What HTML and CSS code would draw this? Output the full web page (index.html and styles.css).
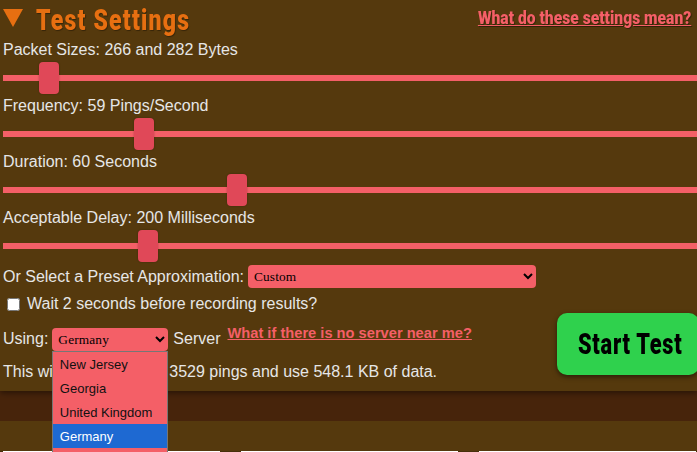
FILE: index.html
```html
<!DOCTYPE html>
<html lang="en">
<head>
<meta charset="utf-8">
<title>Test Settings</title>
<link rel="stylesheet" href="styles.css">
</head>
<body>
<section class="panel">
  <header class="head">
    <h2 class="title"><span class="arrow"></span><span class="title-text">Test Settings</span></h2>
    <a class="help" href="#">What do these settings mean?</a>
  </header>
  <div class="field">
    <label class="lbl">Packet Sizes: 266 and 282 Bytes</label>
    <input class="range" type="range" min="0" max="674" value="36">
  </div>
  <div class="field">
    <label class="lbl">Frequency: 59 Pings/Second</label>
    <input class="range" type="range" min="0" max="674" value="131">
  </div>
  <div class="field">
    <label class="lbl">Duration: 60 Seconds</label>
    <input class="range" type="range" min="0" max="674" value="224">
  </div>
  <div class="field">
    <label class="lbl">Acceptable Delay: 200 Milliseconds</label>
    <input class="range" type="range" min="0" max="674" value="135">
  </div>
  <div class="preset">
    <span>Or Select a Preset Approximation:</span>
    <select class="sel sel-wide"><option>Custom</option></select>
  </div>
  <label class="wait"><input class="check" type="checkbox">Wait 2 seconds before recording results?</label>
  <div class="bottom">
    <div class="bottom-text">
      <div class="using">
        <span>Using:</span>
        <div class="server-wrap">
          <select class="sel sel-small"><option>Germany</option></select>
          <ul class="menu">
            <li>New Jersey</li>
            <li>Georgia</li>
            <li>United Kingdom</li>
            <li class="on">Germany</li>
            <li></li>
          </ul>
        </div>
        <span class="server">Server</span>
        <a class="near" href="#">What if there is no server near me?</a>
      </div>
      <p class="note">This will send a total of 3529 pings and use 548.1 KB of data.</p>
    </div>
    <button class="start" type="button"><span class="start-text">Start Test</span></button>
  </div>
</section>
<div class="band"></div>
<div class="after">
  <div class="strip">
    <div class="w"></div>
    <div class="w"></div>
    <div class="w"></div>
  </div>
</div>
</body>
</html>
```
FILE: styles.css
```css
html, body { margin: 0; height: 452px; overflow: hidden; background: #55390d; }
body { font-family: "Liberation Sans", Arial, sans-serif; font-size: 16px; color: #e6e6e6; }
.panel { height: 391px; background: #55390d; box-shadow: 0 2px 6px rgba(0,0,0,.45); position: relative; padding: 0 0 0 3px; box-sizing: border-box; }
.head { height: 41px; display: flex; justify-content: space-between; align-items: flex-start; }
.title { margin: 4px 0 0; font: 900 30px/32px Roboto, "Liberation Sans", sans-serif; color: #e76f11; display: flex; align-items: flex-start; text-shadow: 1px 1px 1px rgba(0,0,0,.35); }
.title-text { display: inline-block; letter-spacing: 1.5px; transform: scaleX(.77); transform-origin: left center; white-space: nowrap; }
.arrow { width: 0; height: 0; border-left: 10.5px solid transparent; border-right: 10.5px solid transparent; border-top: 18px solid #e76f11; margin: 5px 13px 0 0; }
.help { margin: 8px 6px 0 0; font: 900 18px/20px Roboto, "Liberation Sans", sans-serif; color: #f45f67; text-shadow: 1px 1px 1px rgba(0,0,0,.4); transform: scaleX(.87); transform-origin: right center; white-space: nowrap; }
.field { height: 56px; }
.lbl { display: block; height: 18px; line-height: 18px; }
.range { display: block; -webkit-appearance: none; appearance: none; width: 694px; height: 32px; margin: 3px 0 0; padding: 0; background: transparent; }
.range::-webkit-slider-runnable-track { height: 6px; background: #f45f67; }
.range::-webkit-slider-thumb { -webkit-appearance: none; appearance: none; width: 20px; height: 32px; margin-top: -13px; border-radius: 4px; background: #e04858; box-shadow: 0 0 2px rgba(0,0,0,.3); }
.preset { display: flex; align-items: center; gap: 4px; height: 23px; }
.sel { font-family: "Liberation Serif", serif; font-size: 13.33px; letter-spacing: .15px; color: #000; background-color: #f45f67; border: 0; border-radius: 4px; padding: 0 0 0 2px; height: 23px; }
.sel-wide { width: 288px; }
.sel-small { width: 116px; display: block; }
.wait { display: flex; align-items: center; height: 18px; margin-top: 7px; }
.check { width: 13px; height: 13px; margin: 0 7px 0 4px; }
.bottom { display: flex; justify-content: space-between; align-items: flex-start; }
.bottom-text { margin-top: 15px; }
.using { display: flex; align-items: flex-start; gap: 4px; line-height: 21px; }
.server-wrap { position: relative; }
.server { margin-left: 1px; }
.menu { position: absolute; z-index: 5; left: 0; top: 23px; width: 114px; height: 102px; margin: 0; padding: 0; list-style: none; background: #f45f67; border: 1px solid #767676; font-size: 13px; line-height: 26px; color: #111; overflow: hidden; }
.menu li { height: 24px; padding: 0 6.5px; }
.menu .on { background: #1e69d2; color: #fff; }
.near { font-weight: bold; font-size: 14.67px; line-height: 17px; color: #f45f67; margin-left: 3px; margin-top: -3px; white-space: nowrap; }
.note { margin: 12px 0 0; line-height: 18px; white-space: nowrap; }
.start { flex: none; width: 142px; height: 62px; margin: 0 -2px 0 0; border: 0; border-radius: 10px; background: #2fd14d; color: #000; font: 900 29px Roboto, "Liberation Sans", sans-serif; box-shadow: 0 2px 5px rgba(0,0,0,.5); padding: 0 21px; text-align: left; }
.start-text { display: inline-block; letter-spacing: 1px; transform: scaleX(.75); transform-origin: left center; white-space: nowrap; }
.band { height: 30px; background: #47240b; }
.after { height: 31px; box-sizing: border-box; padding-top: 30px; background: #55390d; }
.strip { height: 1px; display: flex; gap: 21px; padding-left: 3px; background: #47300c; }
.w { flex: none; width: 217px; height: 1px; background: #fff; }
```
